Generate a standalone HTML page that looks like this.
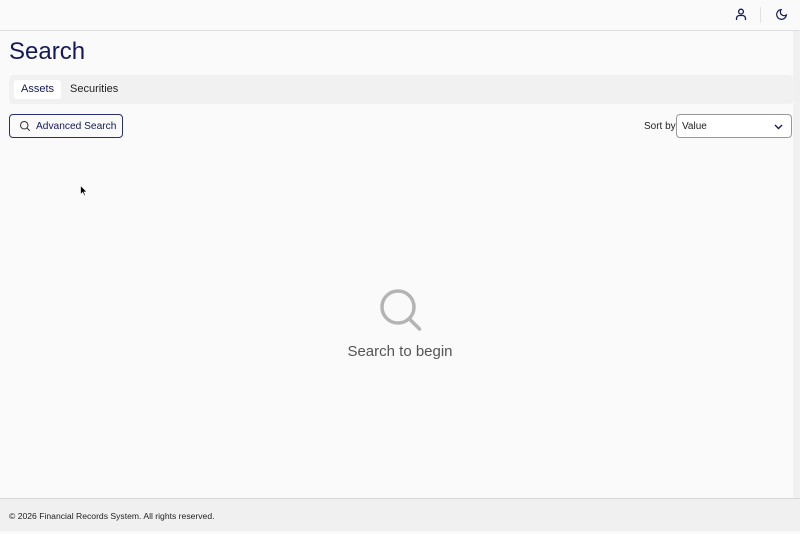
<!DOCTYPE html>
<html><head><meta charset="utf-8"><style>
*{box-sizing:border-box;margin:0;padding:0}
body{width:800px;height:531px;background:#fafafb;font-family:"Liberation Sans",sans-serif;position:relative;overflow:hidden;color:#222}
.hdr{position:absolute;left:0;top:0;width:800px;height:31px;border-bottom:1px solid #dedede;background:#fafafb}
.sb{position:absolute;right:0;top:31px;width:7px;height:467px;background:#f0f0f1}
h1{position:absolute;left:9px;top:38px;font-size:24px;font-weight:normal;color:#14185a}
.tabs{position:absolute;left:9px;top:75px;width:784px;height:29px;background:#f1f1f2;border-radius:4px}
.tab{position:absolute;top:5px;height:19px;font-size:11px;line-height:19px;padding:0 7px;white-space:nowrap}
.t1{left:5px;background:#fff;border-radius:3px;color:#14185a}
.t2{left:54px;color:#222}
.adv{position:absolute;left:9px;top:114px;width:114px;height:24px;border:1px solid #2a2e72;border-radius:4px;font-size:10.2px;color:#14185a;line-height:23px;padding-left:26px;white-space:nowrap}
.adv svg{position:absolute;left:9px;top:5px}
.sort{position:absolute;left:644px;top:121px;font-size:10px;color:#222;white-space:nowrap}
.sel{position:absolute;left:676px;top:114px;width:116px;height:24px;border:1px solid #999;border-radius:4px;background:#fff;font-size:10px;line-height:23px;padding-left:5px}
.sel svg{position:absolute;right:8px;top:9px}
.empty{position:absolute;left:0;top:343px;width:800px;text-align:center;font-size:15px;color:#555;white-space:nowrap}
.foot{position:absolute;left:0;top:498px;width:800px;height:33px;background:#f0f0f1;border-top:1px solid #d8d8d8;font-size:8.6px;line-height:35px;padding-left:9px;color:#222;white-space:nowrap}
</style></head><body>
<div class="hdr">
<svg style="position:absolute;left:735px;top:8px" width="12" height="13" viewBox="0 0 12 13" fill="none" stroke="#14185a" stroke-width="1.3"><circle cx="6" cy="3.6" r="2.4"/><path d="M1.5 12v-1.5a3 3 0 0 1 3-3h3a3 3 0 0 1 3 3V12"/></svg>
<div style="position:absolute;left:760px;top:7px;width:1px;height:16px;background:#e2e2e2"></div>
<svg style="position:absolute;left:775px;top:8px" width="13" height="13" viewBox="0 0 24 24" fill="none" stroke="#14185a" stroke-width="2.2"><path d="M21 12.8A9 9 0 1 1 11.2 3a7 7 0 0 0 9.8 9.8z"/></svg>
</div>
<div class="sb"></div>
<h1>Search</h1>
<div class="tabs"><div class="tab t1">Assets</div><div class="tab t2">Securities</div></div>
<div class="adv"><svg width="12" height="12" viewBox="0 0 24 24" fill="none" stroke="#333" stroke-width="2"><circle cx="10.5" cy="10.5" r="7.5"/><path d="M16 16l5.5 5.5"/></svg>Advanced Search</div>
<div class="sort">Sort by</div>
<div class="sel">Value<svg width="9" height="6" viewBox="0 0 9 6" fill="none" stroke="#14185a" stroke-width="1.4"><path d="M1 1l3.5 3.5L8 1"/></svg></div>
<svg style="position:absolute;left:378px;top:288px" width="46" height="44" viewBox="0 0 46 44" fill="none" stroke="#b4b4b4" stroke-width="3.5"><circle cx="20" cy="19" r="16"/><path d="M31.5 31l10 10" stroke-linecap="round"/></svg>
<div class="empty">Search to begin</div>
<svg style="position:absolute;left:80px;top:185px" width="8" height="12" viewBox="0 0 8 12"><path d="M0.5 0.5v9l2.2-2 1.6 3.3 1.2-.6-1.5-3.2h3z" fill="#000" stroke="#fff" stroke-width=".7"/></svg>
<div class="foot">© 2026 Financial Records System. All rights reserved.</div>
</body></html>
